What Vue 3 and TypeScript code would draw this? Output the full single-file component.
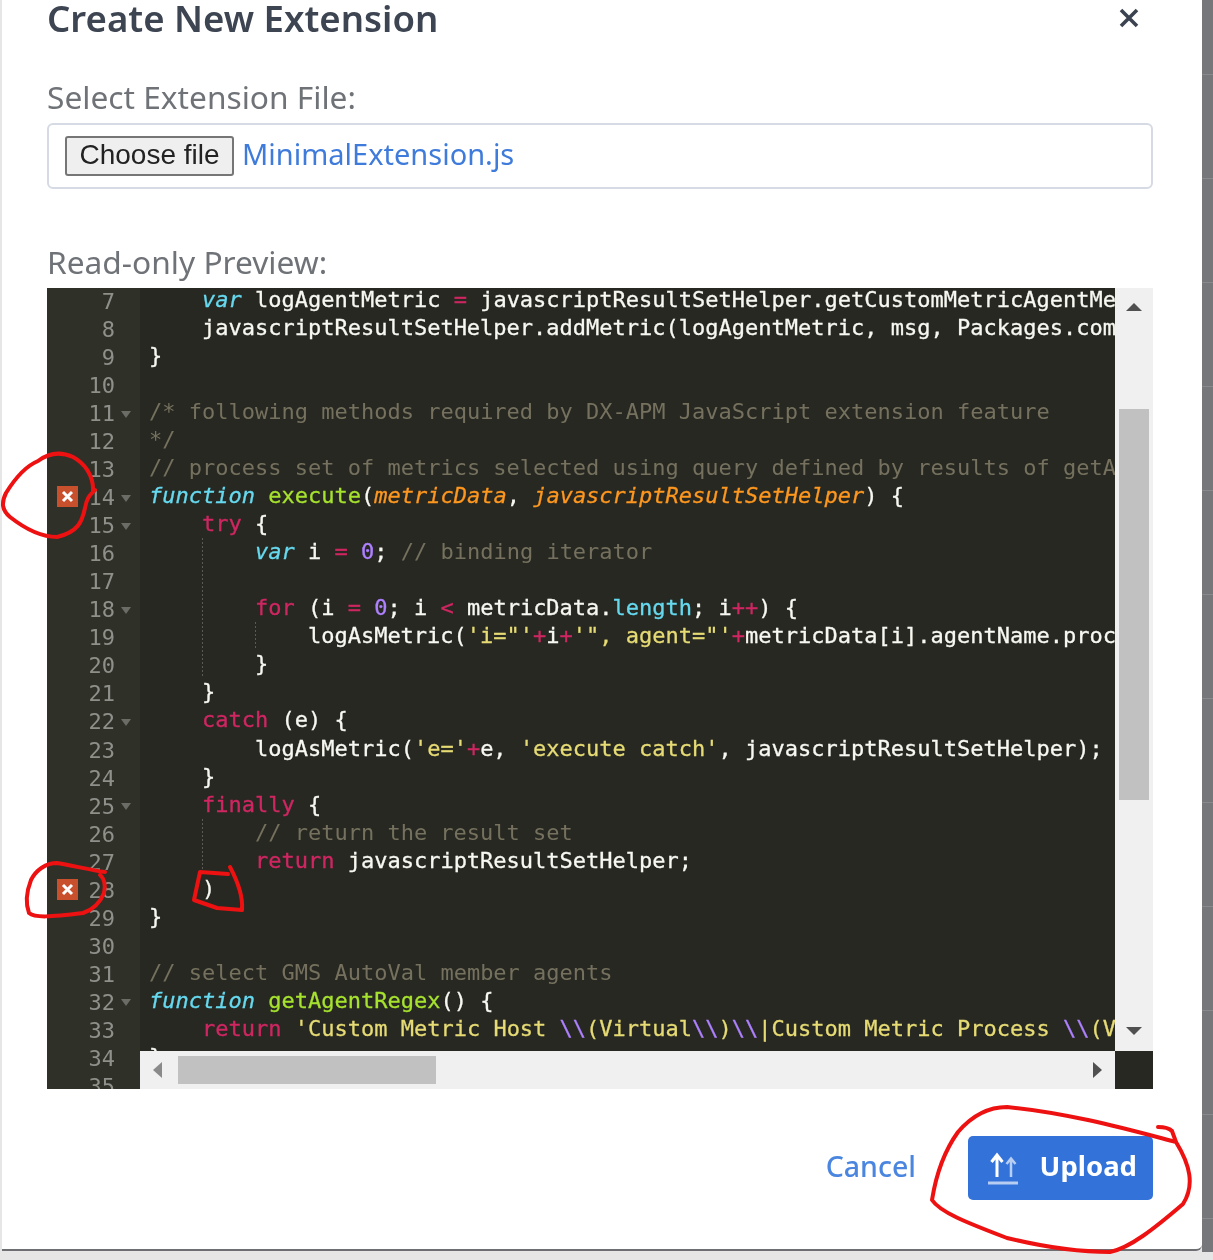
<script setup lang="ts">
type Tok = [string, string];
interface Line { n: number; indent: number; guides: number[]; toks: Tok[]; }
const mk = (n: number, indent: number, guides: number[], toks: Tok[] = []): Line => ({ n, indent, guides, toks });
const T = (s: string): Tok => ['t', s];
const K = (s: string): Tok => ['k', s];
const I = (s: string): Tok => ['i', s];
const C = (s: string): Tok => ['c', s];
const S = (s: string): Tok => ['s', s];
const lines: Line[] = [
  mk(7, 1, [], [I('var'), T(' logAgentMetric '), K('='), T(' javascriptResultSetHelper.getCustomMetricAgentMetric')]),
  mk(8, 1, [], [T('javascriptResultSetHelper.addMetric(logAgentMetric, msg, Packages.com.wily')]),
  mk(9, 0, [], [T('}')]),
  mk(10, 0, []),
  mk(11, 0, [], [C('/* following methods required by DX-APM JavaScript extension feature')]),
  mk(12, 0, [], [C('*/')]),
  mk(13, 0, [], [C('// process set of metrics selected using query defined by results of getAgentRegex')]),
  mk(14, 0, [], [I('function'), T(' '), ['f', 'execute'], T('('), ['p', 'metricData'], T(', '), ['p', 'javascriptResultSetHelper'], T(') {')]),
  mk(15, 1, [], [K('try'), T(' {')]),
  mk(16, 2, [2], [I('var'), T(' i '), K('='), T(' '), ['n', '0'], T('; '), C('// binding iterator')]),
  mk(17, 2, [2]),
  mk(18, 2, [2], [K('for'), T(' (i '), K('='), T(' '), ['n', '0'], T('; i '), K('<'), T(' metricData.'), ['b', 'length'], T('; i'), K('++'), T(') {')]),
  mk(19, 3, [2, 3], [T('logAsMetric('), S(`'i="'`), K('+'), T('i'), K('+'), S(`'", agent="'`), K('+'), T('metricData[i].agentName.processURL')]),
  mk(20, 2, [2], [T('}')]),
  mk(21, 1, [], [T('}')]),
  mk(22, 1, [], [K('catch'), T(' (e) {')]),
  mk(23, 2, [], [T('logAsMetric('), S(`'e='`), K('+'), T('e, '), S(`'execute catch'`), T(', javascriptResultSetHelper);')]),
  mk(24, 1, [], [T('}')]),
  mk(25, 1, [], [K('finally'), T(' {')]),
  mk(26, 2, [2], [C('// return the result set')]),
  mk(27, 2, [2], [K('return'), T(' javascriptResultSetHelper;')]),
  mk(28, 1, [], [T(')')]),
  mk(29, 0, [], [T('}')]),
  mk(30, 0, []),
  mk(31, 0, [], [C('// select GMS AutoVal member agents')]),
  mk(32, 0, [], [I('function'), T(' '), ['f', 'getAgentRegex'], T('() {')]),
  mk(33, 1, [], [K('return'), T(' '), S(`'Custom Metric Host `), ['n', '\\\\'], S('(Virtual'), ['n', '\\\\'], S(')'), ['n', '\\\\'], S('|Custom Metric Process '), ['n', '\\\\'], S('(Virtual')]),
  mk(34, 0, [], [T('}')]),
  mk(35, 0, []),
];
const folds = new Set([11, 14, 15, 18, 22, 25, 32]);
const errors = new Set([14, 28]);
</script>

<template>
  <div class="page">
    <section class="modal">
      <header class="head">
        <h1>Create New Extension</h1>
        <svg class="close" width="20" height="20" viewBox="0 0 20 20"><path d="M2 2 18 18M18 2 2 18" /></svg>
      </header>
      <label class="label first">Select Extension File:</label>
      <div class="file">
        <button class="choose" type="button">Choose file</button>
        <span class="fname">MinimalExtension.js</span>
      </div>
      <label class="label second">Read-only Preview:</label>
      <div class="editor">
        <div class="gutter">
          <div v-for="l in lines" :key="l.n" class="gline">
            <svg v-if="errors.has(l.n)" class="err" width="21" height="21" viewBox="0 0 21 21">
              <rect width="21" height="21" fill="#c9502c" />
              <path d="M6 6 15 15M15 6 6 15" stroke="#fff" stroke-width="3" />
            </svg>
            <span class="num">{{ l.n }}</span>
            <span class="fold" :class="{ on: folds.has(l.n) }"></span>
          </div>
        </div>
        <div class="code">
          <div v-for="l in lines" :key="l.n" class="cline">
            <span v-for="g in l.indent" :key="g" class="ind" :class="{ guide: l.guides.includes(g) }"></span>
            <span v-for="(t, i) in l.toks" :key="i" :class="t[0]">{{ t[1] }}</span>
          </div>
        </div>
        <div class="vbar">
          <span class="tri up"></span>
          <span class="vthumb"></span>
          <span class="tri down"></span>
        </div>
        <div class="hbar">
          <span class="tri left"></span>
          <span class="hthumb"></span>
          <span class="tri right"></span>
        </div>
        <div class="corner"></div>
      </div>
      <footer class="foot">
        <a class="cancel">Cancel</a>
        <button class="upload" type="button">
          <svg width="32" height="34" viewBox="0 0 32 34" fill="none" stroke="#fff">
            <path d="M9 26V5M3.5 11 9 4l5.5 7" stroke-width="3" />
            <path d="M23 26V8M18.500 13 23 7.500 27.500 13" stroke-width="2.500" opacity=".65" />
            <path d="M0 32h30" stroke-width="3" opacity=".65" />
          </svg>
          <span class="upload-text">Upload</span>
        </button>
      </footer>
    </section>
    <svg class="ink" width="1213" height="1260" viewBox="0 0 1213 1260" fill="none" stroke="#ee1111" stroke-width="4" stroke-linecap="round" stroke-linejoin="round">
      <path d="M95 490C90 495 87 497 85 508 82 522 78 532 57 537 40 537 24 528 10 517 2 510 1 503 6 493 14 480 26 466 38 461 50 452 62 452 73 457 84 463 94 475 93 492" />
      <path d="M105 872C90 870 75 866 57 863 46 863 36 870 31 880 26 893 26 905 29 913 35 918 50 917 83 913 92 910 100 903 104 893 106 885 104 878 100 875" />
      <path d="M228 874 200 872 194 900 217 908 242 910C243 898 238 882 230 867" />
      <path d="M1158 1127C1165 1127 1170 1129 1172 1131L1176 1142C1130 1130 1070 1113 1007 1107 985 1107 970 1118 958 1132 945 1150 936 1175 932 1200 940 1212 965 1222 1007 1238 1040 1246 1075 1252 1110 1252 1130 1248 1155 1228 1183 1204 1195 1185 1190 1165 1176 1142" />
    </svg>
  </div>
</template>

<style>
html, body { margin: 0; padding: 0; }
</style>

<style scoped>
.page {
  position: relative;
  width: 1213px;
  height: 1260px;
  overflow: hidden;
  box-sizing: border-box;
  padding: 0 11px 0 2px;
  background: #e6e6e6;
  font-family: "Noto Sans", "Open Sans", sans-serif;
}
.page::before {
  content: "";
  position: absolute;
  right: 0;
  top: 0;
  width: 11px;
  height: 1252px;
  background: repeating-linear-gradient(to bottom, #76777b 0 74px, #88898d 74px 75px, #76777b 75px 104px);
}
.modal {
  position: relative;
  display: flex;
  flex-direction: column;
  box-sizing: border-box;
  height: 1251px;
  padding: 0 49px 0 45px;
  background: #fff;
  border-bottom: 2px solid #6e6f73;
  border-radius: 0 0 6px 0;
  filter: blur(0.6px);
}
.head {
  display: flex;
  justify-content: space-between;
  align-items: center;
  height: 36px;
}
h1 {
  margin: 0;
  font-size: 36.6px;
  line-height: 36px;
  font-weight: 600;
  color: #3e4552;
}
.close { margin-right: 14px; }
.close path { stroke: #3c4350; stroke-width: 3.6; }
.label {
  display: block;
  font-size: 31.7px;
  line-height: 40px;
  color: #6f7378;
}
.first { margin-top: 41px; }
.second { margin-top: 53px; }
.file {
  display: flex;
  align-items: center;
  gap: 8px;
  box-sizing: border-box;
  height: 66px;
  margin-top: 6px;
  padding: 0 16px;
  border: 2px solid #d6dae4;
  border-radius: 6px;
}
.choose {
  box-sizing: border-box;
  width: 169px;
  height: 40px;
  padding: 0 0 2px;
  background: #efefef;
  border: 2px solid #767676;
  border-radius: 3px;
  font: 28px/1 "Liberation Sans", sans-serif;
  color: #222;
}
.fname { font-size: 29px; line-height: 36px; padding-bottom: 4px; color: #3f7bdb; }
.editor {
  display: grid;
  grid-template-columns: 93px 975px 38px;
  grid-template-rows: 763px 38px;
  margin-top: 6px;
  background: #272822;
  font: 22px/28.04px "DejaVu Sans Mono", monospace;
}
.gutter {
  grid-row: 1 / 3;
  overflow: hidden;
  background: #2f3129;
  color: #8f908a;
}
.gline, .cline {
  position: relative;
  height: 28.04px;
  white-space: pre;
}
.code .cline:first-child { margin-top: -2px; }
.gline {
  display: flex;
  justify-content: flex-end;
  align-items: center;
  padding-right: 7px;
}
.fold { width: 18px; height: 7px; }
.fold.on { position: relative; }
.fold.on::after {
  content: "";
  position: absolute;
  left: 6px;
  top: 0;
  border: 5.5px solid transparent;
  border-top: 7px solid #6b6c66;
  border-bottom: 0;
}
.err { position: absolute; left: 10px; top: 2px; }
.code {
  overflow: hidden;
  padding-left: 9px;
  color: #f8f8f2;
  -webkit-text-stroke: 0.3px;
}
.ind { display: inline-block; width: 4ch; height: 28.04px; vertical-align: top; }
.guide { background: linear-gradient(#5a5b55 50%, transparent 0) 0 0 / 1px 4px repeat-y; }
.k { color: #f92672; opacity: .8; }
.i { color: #66d9ef; font-style: italic; }
.c { color: #75715e; -webkit-text-stroke: 0; }
.s { color: #e6db74; }
.n { color: #ae81ff; }
.f { color: #a6e22e; }
.p { color: #fd971f; font-style: italic; }
.b { color: #66d9ef; }
.vbar {
  position: relative;
  display: flex;
  justify-content: center;
  align-items: flex-start;
  background: #f0f0f0;
}
.vthumb { width: 30px; height: 391px; margin-top: 121px; background: #c1c1c1; }
.hbar {
  position: relative;
  background: #f0f0f0;
  padding: 5px 0 0 38px;
}
.hthumb { display: block; width: 258px; height: 28px; background: #c1c1c1; }
.corner { background: #272822; }
.tri { position: absolute; width: 0; height: 0; border: 7px solid transparent; }
.up { top: 15px; left: 11px; border-top: 0; border-bottom: 8px solid #505050; border-left-width: 8px; border-right-width: 8px; }
.down { bottom: 16px; left: 11px; border-bottom: 0; border-top: 8px solid #505050; border-left-width: 8px; border-right-width: 8px; }
.left { left: 13px; top: 11px; border-left: 0; border-right: 9px solid #8a8a8a; border-top-width: 8px; border-bottom-width: 8px; }
.right { right: 13px; top: 11px; border-right: 0; border-left: 9px solid #505050; border-top-width: 8px; border-bottom-width: 8px; }
.foot {
  display: flex;
  justify-content: flex-end;
  align-items: center;
  gap: 52px;
  margin-top: 47px;
}
.cancel { font-size: 28.5px; line-height: 36px; padding-bottom: 4px; font-weight: 500; color: #4a86e0; }
.upload {
  display: flex;
  align-items: center;
  justify-content: space-between;
  box-sizing: border-box;
  width: 185px;
  height: 64px;
  padding: 0 16px 0 20px;
  border: 0;
  border-radius: 5px;
  background: #3373d9;
  color: #fff;
  font: 700 27.5px "Noto Sans", sans-serif;
}
.upload-text { line-height: 36px; padding-bottom: 4px; }
.ink { position: absolute; left: 0; top: 0; pointer-events: none; filter: blur(0.4px); }
</style>
